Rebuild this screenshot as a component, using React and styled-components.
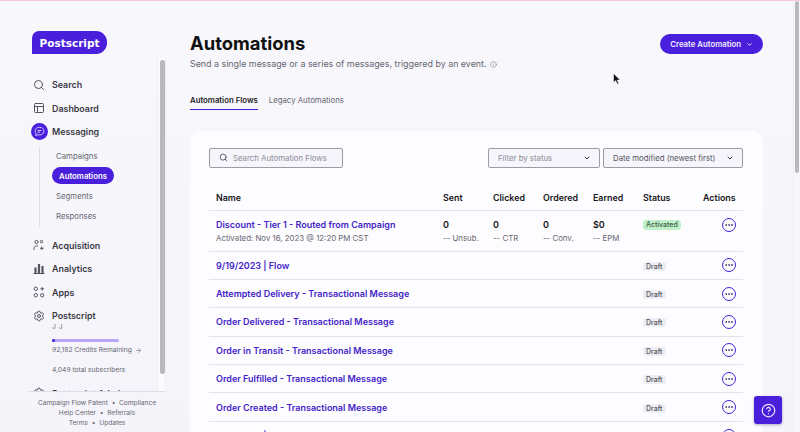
import React from "react";
import styled, { createGlobalStyle } from "styled-components";
import { Search, PanelsTopLeft, ChevronDown, Settings, CircleHelp, Ellipsis, Info, ArrowRight } from "lucide-react";

const purple = "#4a1fdc";
const ink = "#3a3a45";
const muted = "#666672";

const GlobalStyle = createGlobalStyle`
  html, body { margin: 0; padding: 0; height: 100%; overflow: hidden; }
  body { background: #f6f5fb; font-family: Inter, "Liberation Sans", sans-serif; }
  * { box-sizing: border-box; }
`;

const Page = styled.div`
  position: relative;
  display: flex;
  width: 800px;
  height: 432px;
  overflow: hidden;
  border-top: 1px solid #f6ccd3;
  background: linear-gradient(180deg, #f8f7fc 0%, #f5f4fa 100%);
`;

const Sidebar = styled.aside`
  position: relative;
  display: flex;
  flex-direction: column;
  flex: 0 0 190px;
  height: 431px;
`;

const Logo = styled.div`
  align-self: flex-start;
  margin: 30px 0 0 32px;
  width: 75px;
  height: 23px;
  display: flex;
  align-items: center;
  justify-content: center;
  background: ${purple};
  color: #fff;
  font-family: "DejaVu Sans", sans-serif;
  font-weight: 700;
  font-size: 10.5px;
  border-radius: 7px 11px 11px 0;
`;

const NavScroll = styled.nav`
  flex: 1;
  width: 136px;
  margin: 19px 0 0 29px;
  min-height: 0;
  overflow: hidden;
`;

const NavItem = styled.div`
  display: flex;
  align-items: center;
  height: 23.5px;
  gap: 4.5px;
  color: ${ink};
  font-size: 8.9px;
  font-weight: 600;
  white-space: nowrap;
`;

const NavIcon = styled.span`
  display: flex;
  align-items: center;
  justify-content: center;
  flex: 0 0 17px;
  width: 17px;
  height: 17px;
  margin-left: 1.5px;
  border-radius: 50%;
  color: ${(p) => (p.$active ? "#d9d0fb" : "#55555f")};
  background: ${(p) => (p.$active ? purple : "transparent")};
`;

const SubNav = styled.div`
  display: flex;
  flex-direction: column;
  align-items: flex-start;
  margin: 3.75px 0 6px 9.5px;
  padding-left: 12.5px;
  border-left: 1px solid #dedde6;
`;

const SubItem = styled.div`
  display: flex;
  align-items: center;
  height: 17px;
  margin-bottom: 3px;
  padding: 0 7px 0 ${(p) => (p.$active ? "7px" : "4px")};
  border-radius: 9px;
  font-size: 7.8px;
  font-weight: ${(p) => (p.$active ? 600 : 400)};
  color: ${(p) => (p.$active ? "#fff" : muted)};
  background: ${(p) => (p.$active ? purple : "transparent")};
`;

const AccountInfo = styled.div`
  margin: -5px 0 0 23px;
  color: ${muted};
  font-size: 6.7px;
`;

const AccountName = styled.div`
  height: 10px;
  line-height: 10px;
  letter-spacing: 0.5px;
`;

const Credits = styled.div`
  width: 67px;
  height: 3px;
  margin: 6.5px 0 3.5px;
  border-radius: 2px;
  background: #b8a6f4;
`;

const CreditsFill = styled.div`
  height: 3px;
  border-radius: 2px;
  background: ${purple};
`;

const CreditLine = styled.div`
  display: flex;
  align-items: center;
  gap: 3px;
  height: 10px;
  white-space: nowrap;
`;

const Subscribers = styled.div`
  margin: 10px 0 6px;
  height: 10px;
  line-height: 10px;
  white-space: nowrap;
`;

const SideFooter = styled.footer`
  margin-left: 29px;
  width: 136px;
  height: 41px;
  padding-top: 6px;
  border-top: 1px solid #dedde6;
  text-align: center;
  color: ${muted};
  font-size: 6.6px;
  line-height: 10px;
  white-space: nowrap;
`;

const SideTrack = styled.div`
  position: absolute;
  left: 157px;
  top: 57px;
  width: 9px;
  height: 333px;
  border-left: 1px solid #f0eff5;
  border-right: 1px solid #f0eff5;
  background: #faf9fd;
`;

const SideScrollbar = styled.div`
  position: absolute;
  left: 160px;
  top: 59px;
  width: 5px;
  height: 314px;
  border-radius: 3px;
  background: #b9b8bd;
`;

const Main = styled.main`
  flex: 0 0 573px;
  display: flex;
  flex-direction: column;
  min-width: 0;
`;

const Header = styled.header`
  display: flex;
  justify-content: space-between;
  align-items: flex-start;
  padding-top: 29px;
`;

const Title = styled.h1`
  margin: 0;
  color: #111;
  font-size: 18.4px;
  line-height: 26px;
  font-weight: 700;
`;

const Subtitle = styled.p`
  display: flex;
  align-items: center;
  gap: 3px;
  margin: 1px 0 0;
  color: ${muted};
  font-size: 8.9px;
  line-height: 14px;
  white-space: nowrap;
`;

const CreateButton = styled.button`
  display: flex;
  align-items: center;
  gap: 5px;
  height: 20px;
  margin-top: 4px;
  padding: 0 10px;
  border: 0;
  border-radius: 10px;
  background: ${purple};
  color: #f1edff;
  font-family: inherit;
  font-size: 7.8px;
  font-weight: 600;
`;

const Tabs = styled.div`
  display: flex;
  gap: 11px;
  margin-top: 23px;
`;

const Tab = styled.div`
  padding: 0 0 2px;
  height: 16px;
  line-height: 13px;
  font-size: 7.8px;
  font-weight: ${(p) => (p.$active ? 600 : 400)};
  color: ${(p) => (p.$active ? "#1c1c22" : muted)};
  border-bottom: ${(p) => (p.$active ? `1px solid ${purple}` : "1px solid transparent")};
`;

const Card = styled.section`
  flex: 1;
  margin-top: 20.5px;
  padding: 17px 20px 0 19px;
  border-radius: 12px 12px 0 0;
  background: #fdfcfe;
  overflow: hidden;
`;

const Filters = styled.div`
  display: flex;
  justify-content: space-between;
  height: 20px;
`;

const FilterGroup = styled.div`
  display: flex;
  gap: 3px;
`;

const Field = styled.div`
  display: flex;
  align-items: center;
  width: ${(p) => p.$w}px;
  height: 20px;
  padding: 0 8px 0 9px;
  gap: 5px;
  border: 1px solid #9c9ca5;
  border-radius: 2px;
  background: #f6f5fb;
  color: ${(p) => (p.$dark ? "#55555f" : "#8b8b95")};
  font-size: 7.8px;
  white-space: nowrap;
  justify-content: ${(p) => (p.$select ? "space-between" : "flex-start")};

  svg {
    flex-shrink: 0;
  }
`;

const TableRow = styled.div`
  display: grid;
  grid-template-columns: 234px 50px 50px 50px 50px 60px 40px;
  height: ${(p) => p.$h}px;
  padding-top: ${(p) => p.$pt || 0}px;
  align-items: ${(p) => (p.$top ? "start" : "center")};
  border-bottom: 1px solid #e4e3ec;
`;

const HeadCell = styled.div`
  padding-left: ${(p) => (p.$first ? "7px" : "0")};
  font-size: 8.9px;
  font-weight: 600;
  color: #17171c;
`;

const NameCell = styled.div`
  padding-left: 7px;
  min-width: 0;
  white-space: nowrap;
`;

const FlowName = styled.div`
  color: #4424c9;
  font-size: 9px;
  line-height: 13px;
  font-weight: 600;
`;

const Meta = styled.div`
  margin-top: 1px;
  color: ${muted};
  font-size: 7.85px;
  line-height: 12px;
  white-space: nowrap;
`;

const Stat = styled.div`
  color: #17171c;
  font-size: 9px;
  line-height: 13px;
  font-weight: 600;
`;

const StatusCell = styled.div`
  display: flex;
  align-items: center;
  height: 13px;
`;

const Badge = styled.span`
  height: ${(p) => (p.$on ? 10 : 9)}px;
  padding: 0 3px;
  border-radius: 3px;
  background: ${(p) => (p.$on ? "#bff0c8" : "#eeedf3")};
  color: ${(p) => (p.$on ? "#3c5a44" : "#55555f")};
  font-size: 7px;
  line-height: ${(p) => (p.$on ? 10 : 9)}px;
  font-weight: 500;
  transform: translateY(1px);
`;

const ActionCell = styled.div`
  display: flex;
  justify-content: center;
  padding-left: 12px;
`;

const MoreButton = styled.span`
  display: flex;
  align-items: center;
  justify-content: center;
  width: 14px;
  height: 14px;
  border: 1px solid ${purple};
  border-radius: 50%;
  color: #3b3486;
`;

const PageTrack = styled.div`
  position: absolute;
  top: 0;
  right: 0;
  width: 7px;
  height: 431px;
  border-left: 1px solid #eeedf3;
  background: #f8f7fb;
`;

const PageScrollbar = styled.div`
  position: absolute;
  top: 0;
  right: 1px;
  width: 4px;
  height: 172px;
  border-radius: 2px;
  background: #b9b8bd;
`;

const HelpButton = styled.button`
  position: absolute;
  left: 754px;
  top: 395px;
  display: flex;
  align-items: center;
  justify-content: center;
  width: 28px;
  height: 28px;
  padding: 0;
  border: 0;
  border-radius: 3px;
  background: ${purple};
  color: #e8e3ff;
  box-shadow: 0 1px 3px rgba(40, 30, 90, 0.35);
`;

const Cursor = styled.svg`
  position: absolute;
  left: 613px;
  top: 72px;
`;

const AcquisitionIcon = () => (
  <svg width="12" height="12" viewBox="0 0 12 12" fill="none" stroke="currentColor" strokeWidth="1">
    <circle cx="3.5" cy="3" r="1.6" />
    <circle cx="8.5" cy="2.6" r="1.2" />
    <path d="M1 11V9.4C1 8 2 7 3.5 7H5M8.8 7.5v3.5M7 9.3h3.6" />
  </svg>
);

const AnalyticsIcon = () => (
  <svg width="12" height="12" viewBox="0 0 12 12" fill="none" stroke="currentColor" strokeWidth="1.2">
    <path d="M2 5h1v5H2zM5.5 1.5h1V10h-1zM9 3.5h1V10H9zM.5 10.5h11" />
  </svg>
);

const AppsIcon = () => (
  <svg width="12" height="12" viewBox="0 0 12 12" fill="none" stroke="currentColor" strokeWidth="1">
    <circle cx="2.8" cy="2.8" r="1.7" />
    <circle cx="2.8" cy="9.2" r="1.7" />
    <circle cx="9.2" cy="9.2" r="1.7" />
    <path d="M9.2 1v3.6M7.4 2.8h3.6" />
  </svg>
);

const MessagingIcon = () => (
  <svg width="11" height="11" viewBox="0 0 11 11" fill="none" stroke="currentColor" strokeWidth=".9">
    <path d="M5.5 1.2c2.6 0 4.4 1.6 4.4 3.9S8.100 9 5.500 9c-.6 0-1.200-.1-1.700-.3L1.600 9.600l.4-2C1.400 6.900 1.100 6 1.100 5.100 1.100 2.800 2.900 1.200 5.500 1.200z" />
    <path d="M3.500 4.500h4M3.500 6.200h2.600" />
  </svg>
);

const rows = [
  "9/19/2023 | Flow",
  "Attempted Delivery - Transactional Message",
  "Order Delivered - Transactional Message",
  "Order in Transit - Transactional Message",
  "Order Fulfilled - Transactional Message",
  "Order Created - Transactional Message",
  "9/18/2023 | Flow",
];

const More = () => (
  <ActionCell>
    <MoreButton>
      <Ellipsis size={10} strokeWidth={2.4} />
    </MoreButton>
  </ActionCell>
);

export default function App() {
  return (
    <Page>
      <GlobalStyle />
      <Sidebar>
        <Logo>Postscript</Logo>
        <NavScroll>
          <NavItem><NavIcon><Search size={12} /></NavIcon>Search</NavItem>
          <NavItem><NavIcon><PanelsTopLeft size={12} /></NavIcon>Dashboard</NavItem>
          <NavItem><NavIcon $active><MessagingIcon /></NavIcon>Messaging</NavItem>
          <SubNav>
            <SubItem>Campaigns</SubItem>
            <SubItem $active>Automations</SubItem>
            <SubItem>Segments</SubItem>
            <SubItem>Responses</SubItem>
          </SubNav>
          <NavItem><NavIcon><AcquisitionIcon /></NavIcon>Acquisition</NavItem>
          <NavItem><NavIcon><AnalyticsIcon /></NavIcon>Analytics</NavItem>
          <NavItem><NavIcon><AppsIcon /></NavIcon>Apps</NavItem>
          <NavItem><NavIcon><Settings size={12} /></NavIcon>Postscript</NavItem>
          <AccountInfo>
            <AccountName>J J</AccountName>
            <Credits><CreditsFill style={{ width: `${(92182 / 2000000) * 100}%` }} /></Credits>
            <CreditLine>92,182 Credits Remaining <ArrowRight size={7} /></CreditLine>
            <Subscribers>4,049 total subscribers</Subscribers>
          </AccountInfo>
          <NavItem><NavIcon><Settings size={12} /></NavIcon>Postscript Admin</NavItem>
        </NavScroll>
        <SideFooter>
          <div>Campaign Flow Patent &nbsp;•&nbsp; Compliance</div>
          <div>Help Center &nbsp;•&nbsp; Referrals</div>
          <div>Terms &nbsp;•&nbsp; Updates</div>
        </SideFooter>
        <SideTrack />
        <SideScrollbar />
      </Sidebar>
      <Main>
        <Header>
          <div>
            <Title>Automations</Title>
            <Subtitle>Send a single message or a series of messages, triggered by an event. <Info size={7} strokeWidth={1.5} /></Subtitle>
          </div>
          <CreateButton>Create Automation <ChevronDown size={7} strokeWidth={3} /></CreateButton>
        </Header>
        <Tabs>
          <Tab $active>Automation Flows</Tab>
          <Tab>Legacy Automations</Tab>
        </Tabs>
        <Card>
          <Filters>
            <Field $w={134}><Search size={9} color="#3a3a45" />Search Automation Flows</Field>
            <FilterGroup>
              <Field $w={112} $select>Filter by status <ChevronDown size={8} strokeWidth={3} color="#3a3a45" /></Field>
              <Field $w={140} $select $dark>Date modified (newest first) <ChevronDown size={8} strokeWidth={3} color="#3a3a45" /></Field>
            </FilterGroup>
          </Filters>
          <TableRow $h={43} $pt={18}>
            <HeadCell $first>Name</HeadCell>
            <HeadCell>Sent</HeadCell>
            <HeadCell>Clicked</HeadCell>
            <HeadCell>Ordered</HeadCell>
            <HeadCell>Earned</HeadCell>
            <HeadCell>Status</HeadCell>
            <HeadCell>Actions</HeadCell>
          </TableRow>
          <TableRow $h={41} $pt={7} $top>
            <NameCell>
              <FlowName>Discount - Tier 1 - Routed from Campaign</FlowName>
              <Meta>Activated: Nov 16, 2023 @ 12:20 PM CST</Meta>
            </NameCell>
            <div><Stat>0</Stat><Meta>-- Unsub.</Meta></div>
            <div><Stat>0</Stat><Meta>-- CTR</Meta></div>
            <div><Stat>0</Stat><Meta>-- Conv.</Meta></div>
            <div><Stat>$0</Stat><Meta>-- EPM</Meta></div>
            <StatusCell><Badge $on>Activated</Badge></StatusCell>
            <More />
          </TableRow>
          {rows.map((name) => (
            <TableRow key={name} $h={28.4}>
              <NameCell><FlowName>{name}</FlowName></NameCell>
              <div /><div /><div /><div />
              <StatusCell><Badge>Draft</Badge></StatusCell>
              <More />
            </TableRow>
          ))}
        </Card>
      </Main>
      <PageTrack />
      <PageScrollbar />
      <HelpButton><CircleHelp size={15} /></HelpButton>
      <Cursor width="8" height="12" viewBox="0 0 8 12">
        <path d="M.5.5v9l2.2-2 1.4 3.400 1.500-.6-1.400-3.300h3z" fill="#111" stroke="#fff" strokeWidth=".5" />
      </Cursor>
    </Page>
  );
}
